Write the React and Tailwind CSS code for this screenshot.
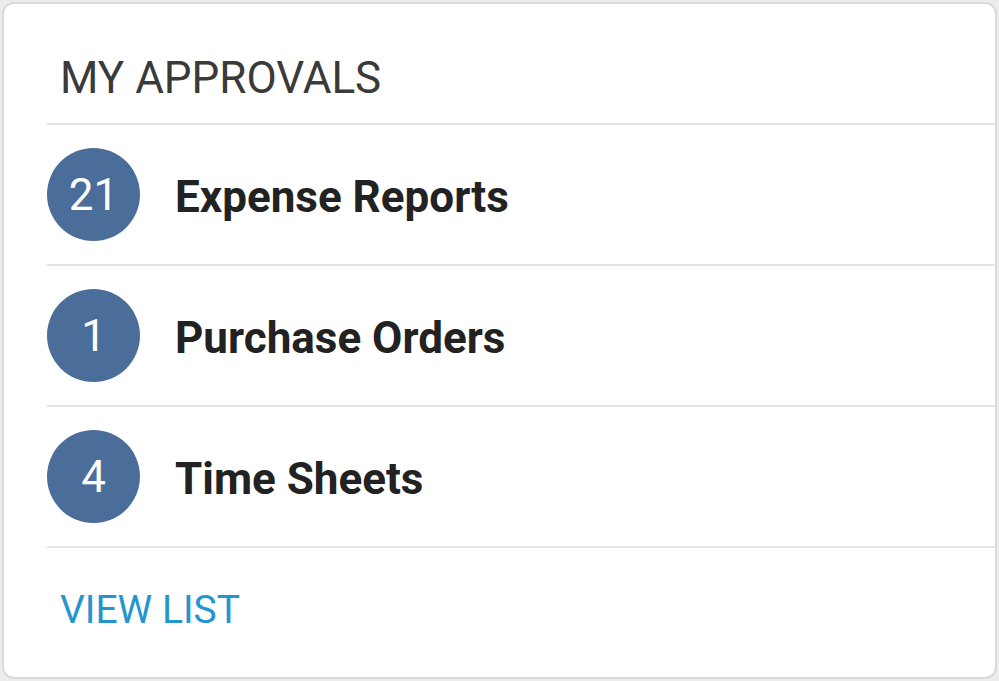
import React from "react";

const approvals = [
  { id: 1, count: 21, label: "Expense Reports" },
  { id: 2, count: 1, label: "Purchase Orders" },
  { id: 3, count: 4, label: "Time Sheets" },
];

const App = () => {
  return (
    <div className="w-[999px] h-[681px] bg-[#ececec] p-[2px] font-['Roboto',sans-serif]">
      <div className="h-full rounded-[12px] border-2 border-[#dadada] bg-white pl-[43px] flex flex-col overflow-hidden">

        {/* ================= HEADER ================= */}
        <div className="h-[119px] pt-[52px] pl-[13px]">
          <h2 className="text-[44px] leading-[44px] text-[#3a3a3a] font-normal">
            MY APPROVALS
          </h2>
        </div>

        {/* ================= LIST ================= */}
        {approvals.map((a) => (
          <div
            key={a.id}
            className="h-[141px] border-t-2 border-[#e4e4e4] flex items-center"
          >
            <div className="w-[93px] h-[93px] rounded-full bg-[#4b6d99] flex items-center justify-center text-white text-[44px] font-normal leading-none">
              {a.count}
            </div>
            <span className="ml-[35px] mt-[4px] text-[44px] leading-[44px] font-bold text-[#222222]">
              {a.label}
            </span>
          </div>
        ))}

        {/* ================= FOOTER ================= */}
        <div className="flex-1 border-t-2 border-[#e4e4e4] pl-[13px] pt-[43px]">
          <a href="#" className="text-[39px] leading-[39px] text-[#2495cf]">
            VIEW LIST
          </a>
        </div>

      </div>
    </div>
  );
};

export default App;
